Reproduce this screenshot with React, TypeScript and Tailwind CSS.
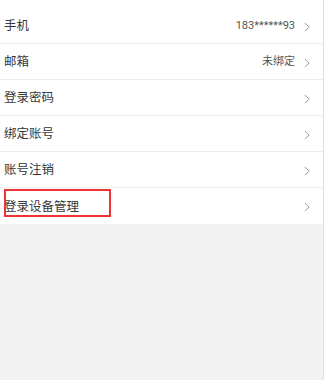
import React from 'react';

const rows = [
  { label: '手机', value: '183******93' },
  { label: '邮箱', value: '未绑定' },
  { label: '登录密码' },
  { label: '绑定账号' },
  { label: '账号注销' },
  { label: '登录设备管理', marked: true },
];

const Chevron = () => (
  <svg width="6" height="10" viewBox="0 0 6 10" className="shrink-0">
    <polyline points="0.8,1 5.2,5 0.8,9" fill="none" stroke="#9a9a9a" strokeWidth="1" />
  </svg>
);

export default function App() {
  return (
    <div
      className="w-[324px] h-[380px] bg-[#f2f2f2] border-r border-[#dedede] overflow-hidden"
      style={{ fontFamily: 'Roboto, "Noto Sans CJK SC", sans-serif' }}
    >
      <div className="bg-white pt-[8px]">
        {rows.map((row, i) => (
          <div
            key={row.label}
            className={
              'relative h-[36px] flex items-center pl-[4px] pr-[13px] pt-[2px] ' +
              (i < rows.length - 1 ? 'border-b border-[#eeeeee]' : '')
            }
          >
            <span className="flex-1 text-[12.5px] text-[#383838]">{row.label}</span>
            {row.value && (
              <span className="text-[11px] text-[#555555] mr-[9px]">{row.value}</span>
            )}
            <Chevron />
            {row.marked && (
              <div className="absolute left-[4px] top-[1px] w-[107px] h-[28px] border-2 border-[#f03434]" />
            )}
          </div>
        ))}
      </div>
    </div>
  );
}
